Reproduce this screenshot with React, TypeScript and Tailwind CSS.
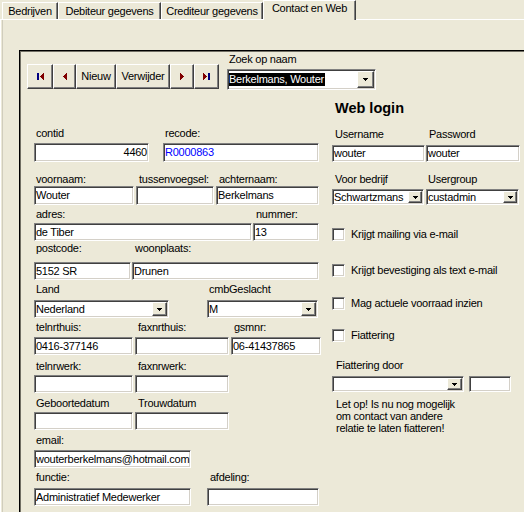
import React from "react";

const SUNKEN =
  "border border-t-[#808080] border-l-[#808080] border-b-white border-r-white shadow-[inset_1px_1px_0_#404040,inset_-1px_-1px_0_#d4d0c8]";
const RAISED =
  "border border-t-white border-l-white border-b-[#404040] border-r-[#404040] shadow-[inset_-1px_-1px_0_#808080] bg-[#ECE9D8]";

function TextBox({
  className = "",
  value = "",
  right = false,
  blue = false,
}: {
  className?: string;
  value?: string;
  right?: boolean;
  blue?: boolean;
}) {
  return (
    <div
      className={`${SUNKEN} bg-white flex items-center overflow-hidden whitespace-nowrap leading-[13px] px-[1px] ${
        right ? "justify-end" : ""
      } ${blue ? "text-[#0000ff]" : "text-black"} ${className}`}
    >
      {value}
    </div>
  );
}

function Arrow() {
  return (
    <svg width="5" height="3" viewBox="0 0 5 3" shapeRendering="crispEdges">
      <rect x="0" y="0" width="5" height="1" fill="#000" />
      <rect x="1" y="1" width="3" height="1" fill="#000" />
      <rect x="2" y="2" width="1" height="1" fill="#000" />
    </svg>
  );
}

function Combo({
  className = "",
  btn = "w-[15px]",
  children,
}: {
  className?: string;
  btn?: string;
  children?: React.ReactNode;
}) {
  return (
    <div className={`${SUNKEN} bg-white flex items-stretch p-[1px] ${className}`}>
      <div className="flex-1 flex items-center overflow-hidden whitespace-nowrap leading-[13px]">
        {children}
      </div>
      <div className={`${RAISED} ${btn} shrink-0 flex items-center justify-center`}>
        <Arrow />
      </div>
    </div>
  );
}

function Check({ label, className = "" }: { label: string; className?: string }) {
  return (
    <div className={`flex items-center h-[13px] ${className}`}>
      <div className={`${SUNKEN} bg-white w-[13px] h-[13px] shrink-0`} />
      <span className="ml-[6px] leading-[13px] whitespace-nowrap">{label}</span>
    </div>
  );
}

function Label({ text, pad = "pl-[3px]" }: { text: string; pad?: string }) {
  return <div className={`h-[13px] leading-[13px] whitespace-nowrap ${pad}`}>{text}</div>;
}

function TriLeft() {
  return (
    <svg width="4" height="7" viewBox="0 0 4 7" shapeRendering="crispEdges">
      <rect x="3" y="0" width="1" height="7" fill="#800000" />
      <rect x="2" y="1" width="1" height="5" fill="#800000" />
      <rect x="1" y="2" width="1" height="3" fill="#800000" />
      <rect x="0" y="3" width="1" height="1" fill="#800000" />
    </svg>
  );
}

function TriRight() {
  return (
    <svg width="4" height="7" viewBox="0 0 4 7" shapeRendering="crispEdges">
      <rect x="0" y="0" width="1" height="7" fill="#800000" />
      <rect x="1" y="1" width="1" height="5" fill="#800000" />
      <rect x="2" y="2" width="1" height="3" fill="#800000" />
      <rect x="3" y="3" width="1" height="1" fill="#800000" />
    </svg>
  );
}

function Bar() {
  return <div className="w-[2px] h-[7px] bg-[#000080]" />;
}

const TAB =
  "h-[17px] border-t border-l border-white border-r border-r-[#404040] shadow-[inset_-1px_0_0_#808080] text-center leading-[13px] pt-[2px] whitespace-nowrap";

export default function App() {
  return (
    <div className="w-[524px] h-[512px] overflow-hidden bg-[#ECE9D8] text-[11px] text-black tracking-[-0.25px] font-['Liberation_Sans',Arial,sans-serif]">
      {/* Tabs */}
      <div className="h-[19px] flex items-end pl-[2px]">
        <div className={`${TAB} w-[56px]`}>Bedrijven</div>
        <div className={`${TAB} w-[103px]`}>Debiteur gegevens</div>
        <div className={`${TAB} w-[102px]`}>Crediteur gegevens</div>
        <div className="relative z-10 -mb-px w-[93px] h-[20px] bg-[#ECE9D8] border-t border-l border-white border-r border-r-[#404040] shadow-[inset_-1px_0_0_#808080] text-center leading-[13px] pt-[1px] whitespace-nowrap">
          Contact en Web
        </div>
      </div>

      {/* Content */}
      <div className="border-t border-l border-white h-[493px]">
        <div className="ml-[1px] border-l border-[#d0cdbd] h-full pt-[30px] pl-[16px]">
          <div className="border-t border-l border-black shadow-[inset_1px_1px_0_#716f64] h-[600px]">
            {/* Top row */}
            <div className="flex items-start">
              <div className="ml-[7px] mt-[13px] flex">
                <div className={`${RAISED} w-[26px] h-[25px] flex items-center justify-center gap-[1px]`}>
                  <Bar />
                  <TriLeft />
                </div>
                <div className={`${RAISED} w-[23px] h-[25px] flex items-center justify-center`}>
                  <TriLeft />
                </div>
                <div className={`${RAISED} w-[40px] h-[25px] flex items-center justify-center leading-[13px]`}>
                  Nieuw
                </div>
                <div className={`${RAISED} w-[54px] h-[25px] flex items-center justify-center leading-[13px]`}>
                  Verwijder
                </div>
                <div className={`${RAISED} w-[24px] h-[25px] flex items-center justify-center`}>
                  <TriRight />
                </div>
                <div className={`${RAISED} w-[25px] h-[25px] flex items-center justify-center gap-[1px]`}>
                  <TriRight />
                  <Bar />
                </div>
              </div>
              <div className="ml-[8px] mt-[2px] flex flex-col">
                <Label text="Zoek op naam" pad="pl-[2px]" />
                <Combo className="mt-[3px] w-[149px] h-[21px]" btn="w-[17px]">
                  <span className="bg-black text-white leading-[13px] pr-[1px]">Berkelmans, Wouter</span>
                </Combo>
              </div>
            </div>

            {/* Body */}
            <div className="flex">
              {/* Left column */}
              <div className="ml-[14px] w-[298px] flex flex-col">
                {/* Row 1 */}
                <div className="flex items-start mt-[37px]">
                  <div className="flex flex-col w-[115px]">
                    <Label text="contid" pad="pl-[2px]" />
                    <TextBox className="mt-[3px] h-[19px]" value="4460" right />
                  </div>
                  <div className="flex flex-col w-[156px] ml-[14px]">
                    <Label text="recode:" pad="pl-[2px]" />
                    <TextBox className="mt-[3px] h-[19px]" value="R0000863" blue />
                  </div>
                </div>
                {/* Row 2 */}
                <div className="flex items-start mt-[11px]">
                  <div className="flex flex-col w-[100px]">
                    <Label text="voornaam:" pad="pl-[2px]" />
                    <TextBox className="h-[19px]" value="Wouter" />
                  </div>
                  <div className="flex flex-col w-[78px] ml-[2px]">
                    <Label text="tussenvoegsel:" />
                    <TextBox className="h-[19px]" />
                  </div>
                  <div className="flex flex-col w-[103px] ml-[2px]">
                    <Label text="achternaam:" />
                    <TextBox className="h-[19px]" value="Berkelmans" />
                  </div>
                </div>
                {/* Row 3 */}
                <div className="flex items-start mt-[3px]">
                  <div className="flex flex-col w-[218px]">
                    <Label text="adres:" pad="pl-[2px]" />
                    <TextBox className="mt-[2px] h-[18px]" value="de Tiber" />
                  </div>
                  <div className="flex flex-col w-[66px] ml-[1px]">
                    <Label text="nummer:" />
                    <TextBox className="mt-[2px] h-[18px]" value="13" />
                  </div>
                </div>
                {/* Row 4 */}
                <div className="flex items-start mt-[1px]">
                  <div className="flex flex-col w-[97px]">
                    <Label text="postcode:" pad="pl-[2px]" />
                    <TextBox className="mt-[7px] h-[18px]" value="5152 SR" />
                  </div>
                  <div className="flex flex-col w-[187px] ml-[1px]">
                    <Label text="woonplaats:" />
                    <TextBox className="mt-[7px] h-[18px]" value="Drunen" />
                  </div>
                </div>
                {/* Row 5 */}
                <div className="flex items-start mt-[3px]">
                  <div className="flex flex-col w-[135px]">
                    <Label text="Land" pad="pl-[2px]" />
                    <Combo className="mt-[4px] h-[18px]">Nederland</Combo>
                  </div>
                  <div className="flex flex-col w-[111px] ml-[38px]">
                    <Label text="cmbGeslacht" pad="pl-[2px]" />
                    <Combo className="mt-[4px] h-[18px]">M</Combo>
                  </div>
                </div>
                {/* Row 6 */}
                <div className="flex items-start mt-[3px]">
                  <div className="flex flex-col w-[99px]">
                    <Label text="telnrthuis:" pad="pl-[2px]" />
                    <TextBox className="mt-[3px] h-[18px]" value="0416-377146" />
                  </div>
                  <div className="flex flex-col w-[94px] ml-[2px]">
                    <Label text="faxnrthuis:" />
                    <TextBox className="mt-[3px] h-[18px]" />
                  </div>
                  <div className="flex flex-col w-[90px] ml-[2px]">
                    <Label text="gsmnr:" />
                    <TextBox className="mt-[3px] h-[18px]" value="06-41437865" />
                  </div>
                </div>
                {/* Row 7 */}
                <div className="flex items-start mt-[5px]">
                  <div className="flex flex-col w-[99px]">
                    <Label text="telnrwerk:" pad="pl-[2px]" />
                    <TextBox className="mt-[2px] h-[18px]" />
                  </div>
                  <div className="flex flex-col w-[94px] ml-[2px]">
                    <Label text="faxnrwerk:" />
                    <TextBox className="mt-[2px] h-[18px]" />
                  </div>
                </div>
                {/* Row 8 */}
                <div className="flex items-start mt-[4px]">
                  <div className="flex flex-col w-[99px]">
                    <Label text="Geboortedatum" pad="pl-[2px]" />
                    <TextBox className="mt-[2px] h-[18px]" />
                  </div>
                  <div className="flex flex-col w-[94px] ml-[2px]">
                    <Label text="Trouwdatum" />
                    <TextBox className="mt-[2px] h-[18px]" />
                  </div>
                </div>
                {/* Row 9 */}
                <div className="flex items-start mt-[4px]">
                  <div className="flex flex-col w-[157px]">
                    <Label text="email:" pad="pl-[2px]" />
                    <TextBox className="mt-[3px] h-[18px]" value="wouterberkelmans@hotmail.com" />
                  </div>
                </div>
                {/* Row 10 */}
                <div className="flex items-start mt-[3px]">
                  <div className="flex flex-col w-[157px]">
                    <Label text="functie:" pad="pl-[2px]" />
                    <TextBox className="mt-[4px] h-[18px]" value="Administratief Medewerker" />
                  </div>
                  <div className="flex flex-col w-[112px] ml-[16px]">
                    <Label text="afdeling:" />
                    <TextBox className="mt-[4px] h-[18px]" />
                  </div>
                </div>
              </div>

              {/* Right column */}
              <div className="flex flex-col w-[190px]">
                <div className="mt-[10px] pl-[3px] text-[14.5px] font-bold leading-[17px] tracking-normal">
                  Web login
                </div>
                <div className="flex items-start mt-[11px]">
                  <div className="flex flex-col w-[93px]">
                    <Label text="Username" />
                    <TextBox className="mt-[4px] h-[17px]" value="wouter" />
                  </div>
                  <div className="flex flex-col w-[94px] ml-[1px]">
                    <Label text="Password" pad="pl-[3px]" />
                    <TextBox className="mt-[4px] h-[17px]" value="wouter" />
                  </div>
                </div>
                <div className="flex items-start mt-[11px]">
                  <div className="flex flex-col w-[92px]">
                    <Label text="Voor bedrijf" />
                    <Combo className="mt-[3px] h-[16px]" btn="w-[14px]">
                      Schwartzmans
                    </Combo>
                  </div>
                  <div className="flex flex-col w-[93px] ml-[2px]">
                    <Label text="Usergroup" pad="pl-[2px]" />
                    <Combo className="mt-[3px] h-[16px]" btn="w-[14px]">
                      custadmin
                    </Combo>
                  </div>
                </div>
                <Check className="mt-[23px]" label="Krijgt mailing via e-mail" />
                <Check className="mt-[23px]" label="Krijgt bevestiging als text e-mail" />
                <Check className="mt-[20px]" label="Mag actuele voorraad inzien" />
                <Check className="mt-[19px]" label="Fiattering" />
                <div className="mt-[17px]">
                  <Label text="Fiattering door" pad="pl-[4px]" />
                </div>
                <div className="flex mt-[4px]">
                  <Combo className="w-[132px] h-[16px]" btn="w-[15px]" />
                  <TextBox className="ml-[5px] w-[42px] h-[16px]" />
                </div>
                <div className="mt-[6px] pl-[4px] leading-[12px]">
                  <div>Let op! Is nu nog mogelijk</div>
                  <div>om contact van andere</div>
                  <div>relatie te laten fiatteren!</div>
                </div>
              </div>
            </div>
          </div>
        </div>
      </div>
    </div>
  );
}
